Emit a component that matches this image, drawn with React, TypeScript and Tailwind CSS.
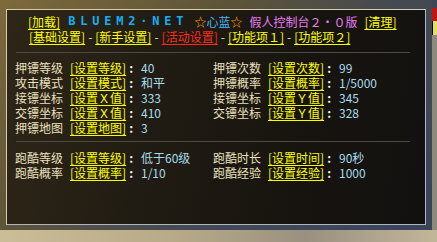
import React from 'react';

const font = { fontFamily: '"Noto Sans CJK SC", "Noto Sans", sans-serif' };

const Link = ({ children, red }: { children: React.ReactNode; red?: boolean }) => (
  <span className={`block h-[15px] underline decoration-1 underline-offset-[2px] ${red ? 'text-[#ff2a1a]' : 'text-[#ffff00]'}`}>
    {children}
  </span>
);

interface Cell {
  label: string;
  link: string;
  value: string;
}

const Field = ({ cell }: { cell: Cell }) => (
  <div className="flex h-[15px] w-[198px] items-center">
    <span className="block h-[15px] w-[55px] text-[#ebe0bf]">{cell.label}</span>
    <span className="flex h-[15px] w-[71px] items-center">
      <Link>{cell.link}</Link>
      <span className="ml-[3px] block h-[15px] font-bold text-[#f4f4f4]">:</span>
    </span>
    <span className="block h-[15px] text-[#a6dcee]">{cell.value}</span>
  </div>
);

const Row = ({ left, right }: { left: Cell; right?: Cell }) => (
  <div className="flex h-[15px] items-center pl-[8px] leading-[15px]">
    <Field cell={left} />
    {right && <Field cell={right} />}
  </div>
);

const escortRows: [Cell, Cell?][] = [
  [
    { label: '押镖等级', link: '[设置等级]', value: '40' },
    { label: '押镖次数', link: '[设置次数]', value: '99' },
  ],
  [
    { label: '攻击模式', link: '[设置模式]', value: '和平' },
    { label: '押镖概率', link: '[设置概率]', value: '1/5000' },
  ],
  [
    { label: '接镖坐标', link: '[设置Ｘ值]', value: '333' },
    { label: '接镖坐标', link: '[设置Ｙ值]', value: '345' },
  ],
  [
    { label: '交镖坐标', link: '[设置Ｘ值]', value: '410' },
    { label: '交镖坐标', link: '[设置Ｙ值]', value: '328' },
  ],
  [{ label: '押镖地图', link: '[设置地图]', value: '3' }],
];

const parkourRows: [Cell, Cell?][] = [
  [
    { label: '跑酷等级', link: '[设置等级]', value: '低于60级' },
    { label: '跑酷时长', link: '[设置时间]', value: '90秒' },
  ],
  [
    { label: '跑酷概率', link: '[设置概率]', value: '1/10' },
    { label: '跑酷经验', link: '[设置经验]', value: '1000' },
  ],
];

export default function App() {
  return (
    <div
      className="flex h-[242px] w-[437px] flex-col overflow-hidden bg-[linear-gradient(90deg,#b9aa86,#a89c80_50%,#b4a888)] text-[12px]"
      style={font}
    >
      <div className="flex h-[230px]">
        <div className="h-[230px] w-[432px] bg-[linear-gradient(135deg,#7d6a3c,#5d5438_35%,#454a52_60%,#39445a)] pb-[5px] pl-[6px] pr-[6px] pt-[9px]">
          <div className="h-full w-full border border-b-[#aeb6c6] border-l-[#d9ceac] border-r-[#aeb6c6] border-t-[#d9ceac]">
            <div className="flex h-full w-full flex-col bg-[linear-gradient(100deg,#2e2617,#211c13_35%,#17140f_70%,#131110)] pt-[4px]">
              <div className="flex h-[15px] items-center pl-[21px] leading-[15px]">
                <Link>[加载]</Link>
                <span
                  className="ml-[8px] block h-[15px] font-bold tracking-[4.8px] text-[#16aef2]"
                  style={{ fontFamily: '"DejaVu Sans Mono", monospace' }}
                >
                  BLUEM2·NET
                </span>
                <span className="ml-[6px] block h-[15px] text-[#ff9a10]">☆</span>
                <span className="block h-[15px] text-[#4cb4f4]">心蓝</span>
                <span className="block h-[15px] text-[#ff9a10]">☆</span>
                <span className="ml-[7px] block h-[15px] text-[#e67ef0]">假人控制台２・０版</span>
                <span className="ml-[7px] block h-[15px]">
                  <Link>[清理]</Link>
                </span>
              </div>
              <div className="flex h-[15px] items-center pl-[22px] leading-[15px] text-[#ebe0bf]">
                <Link>[基础设置]</Link>
                <span className="block h-[15px] px-[3px]">-</span>
                <Link>[新手设置]</Link>
                <span className="block h-[15px] px-[3px]">-</span>
                <Link red>[活动设置]</Link>
                <span className="block h-[15px] px-[3px]">-</span>
                <Link>[功能项１]</Link>
                <span className="block h-[15px] px-[3px]">-</span>
                <Link>[功能项２]</Link>
              </div>
              <div className="ml-[9px] mt-[8px] h-px w-[394px] bg-[#4d4a44]" />
              <div className="mt-[7px] flex flex-col">
                {escortRows.map(([l, r], i) => (
                  <Row key={i} left={l} right={r} />
                ))}
              </div>
              <div className="ml-[9px] mt-[6px] h-px w-[394px] bg-[#4d4a44]" />
              <div className="mt-[8px] flex flex-col">
                {parkourRows.map(([l, r], i) => (
                  <Row key={i} left={l} right={r} />
                ))}
              </div>
            </div>
          </div>
        </div>
        <div className="flex w-[5px] flex-col bg-[#8d8a7c]">
          <div className="h-[8px] bg-[#3e4656]" />
          <div className="h-[13px] bg-[#c41410]" />
          <div className="h-[14px] border-l border-[#000] bg-[#e8e050]" />
        </div>
      </div>
      <div className="h-[12px] bg-[linear-gradient(90deg,#cbbd98,#b8aa88_40%,#9a9080_70%,#c2b69a)]" />
    </div>
  );
}
